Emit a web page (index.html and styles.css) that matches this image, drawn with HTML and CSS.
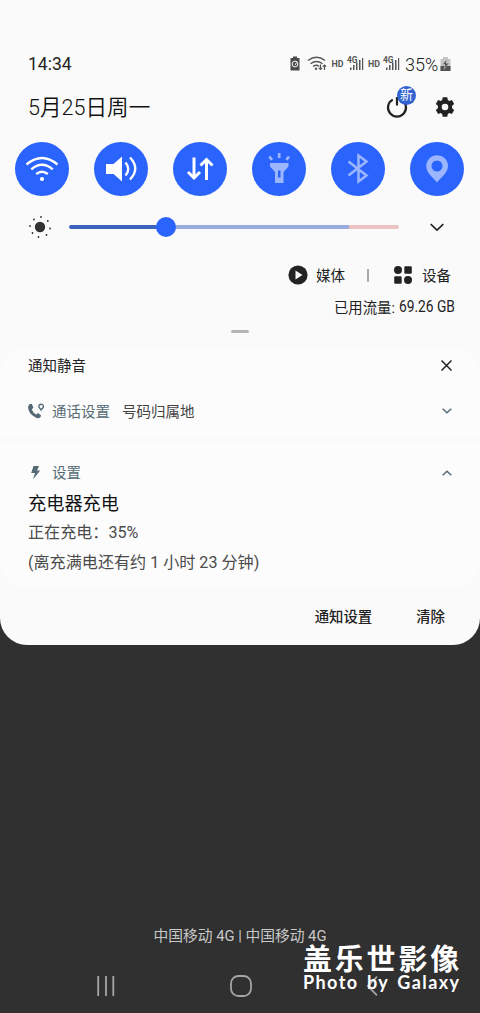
FILE: index.html
```html
<!DOCTYPE html>
<html lang="zh-CN">
<head>
<meta charset="utf-8">
<title>通知面板</title>
<link rel="stylesheet" href="styles.css">
</head>
<body>
<main class="screen">
  <section class="panel">
    <header class="status">
      <span class="clock">14:34</span>
      <svg class="status-icons" width="115" height="24" viewBox="0 0 115 24">
        <path fill="#4a4a4a" d="M3 4.500h4v1.500h2.500v12.500h-9V6H3z"/>
        <circle cx="5" cy="12" r="2.900" fill="none" stroke="#fafafa"/>
        <path stroke="#fafafa" d="M5 13l1.500-2.500"/>
        <g fill="none" stroke="#555" stroke-width="1.400"><path d="M18 8.500q8.500-6.500 17 0M20.500 11.700q6-4.500 12 0M23 14.500q3.500-2.500 6 0"/><path stroke-width="1.200" d="M30.500 12.500v5m-1.700-1.700 1.700 1.700 1.700-1.700M34.500 18v-5m-1.700 1.700 1.700-1.700 1.700 1.700"/></g>
        <circle cx="26" cy="16.700" r="1.200" fill="#555"/>
        <g class="net"><text x="41.500" y="15" textLength="12" lengthAdjust="spacingAndGlyphs">HD</text><text x="78" y="15" textLength="12" lengthAdjust="spacingAndGlyphs">HD</text><text x="57" y="11" textLength="10.500" lengthAdjust="spacingAndGlyphs">4G</text><text x="93" y="11" textLength="10.500" lengthAdjust="spacingAndGlyphs">4G</text></g>
        <path fill="#555" d="M60 15.500h1.500V18H60zM63 13h1.500v5H63zM66 10.500h1.500V18H66zM69 8h1.500v10H69zM72 6h1.200v12H72zM96 15.500h1.500V18H96zM99 13h1.500v5H99zM102 10.500h1.500V18H102zM105 8h1.500v10H105zM108 6h1.200v12H108z"/>
      </svg>
      <span class="percent">35%</span>
      <svg class="battery" width="11" height="16" viewBox="0 0 11 16"><path fill="#c4c4c4" d="M3 1h5v2h2.500v12H.5V3H3z"/><path fill="#505050" d="M.5 10h10v5H.5z"/><path fill="#505050" stroke="#ccc" stroke-width=".5" d="M7 3 2.500 8.500H5l-1 5 5-6.300H6z"/></svg>
    </header>

    <div class="date-row">
      <span class="date">5月25日周一</span>
      <span class="power">
        <svg width="22" height="24" viewBox="0 0 22 24" fill="none" stroke="#222" stroke-width="2.200"><path d="M6.800 4.600a9 9 0 1 0 8.400 0M11 2v8.500"/></svg>
        <b class="badge">新</b>
      </span>
      <svg class="gear" width="20" height="20" viewBox="0 0 20 20"><path fill="#222" fill-rule="evenodd" d="M7.700.300h4.600l.5 2.700 1.500.900 2.600-1 2.300 4-2.100 1.800v2.600l2.100 1.800-2.300 4-2.600-1-1.500.900-.5 2.700H7.700L7.200 17l-1.500-.900-2.600 1-2.300-4 2.100-1.800V8.700L.8 6.900l2.300-4 2.600 1L7.200 3zM10 6.700a3.300 3.300 0 1 0 0 6.600 3.300 3.300 0 1 0 0-6.600z"/></svg>
    </div>

    <nav class="quick">
      <span class="toggle"><svg viewBox="0 0 54 54" fill="none" stroke="#fff" stroke-width="2.400"><path d="M11.500 22.500q15.500-13 31 0M16.300 27.300q10.700-9 21.400 0M21.200 32q5.800-4.500 11.600 0"/><circle cx="27" cy="37" r="2.100" fill="#fff" stroke="none"/></svg></span>
      <span class="toggle"><svg viewBox="0 0 54 54" fill="none" stroke="#fff" stroke-width="2.300"><path fill="#fff" stroke="none" d="M12 22h7.500L28 14.500v25L19.500 32H12z"/><path d="M31.500 20.500q5.500 6.500 0 13M36 15.500q10.500 11 0 22"/></svg></span>
      <span class="toggle"><svg viewBox="0 0 54 54" fill="none" stroke="#fff" stroke-width="3"><path d="M21 15.500V37m-6-7 6 6 6-6M33.500 38V17m-6 6.500 6-6 6 6"/></svg></span>
      <span class="toggle"><svg viewBox="0 0 54 54"><path fill="#9bb6ff" fill-rule="evenodd" d="M18 21h18.500v3.500L31.500 30v11h-8.500V30L18 24.500zM26 28.500v7h2.500v-7z"/><path stroke="#9bb6ff" stroke-width="2.700" d="M27.200 11v5M17.300 14.500l2.700 3.300M37 14.500l-2.700 3.300"/></svg></span>
      <span class="toggle"><svg viewBox="0 0 54 54" fill="none" stroke="#9bb6ff" stroke-width="2.500"><path d="M17.500 19.500 35.500 33.500l-8 6V13.500l8 6-18 14"/></svg></span>
      <span class="toggle"><svg viewBox="0 0 54 54"><path fill="#9bb6ff" fill-rule="evenodd" d="M27 13.300A10.800 10.800 0 0 0 16.200 24c0 7 7 11.500 10.800 16.500C30.800 35.500 38 31 38 24a10.800 10.800 0 0 0-11-10.700zM27 18.500a5.500 5.500 0 1 1 0 11 5.500 5.500 0 1 1 0-11z"/></svg></span>
    </nav>

    <div class="brightness">
      <svg class="sun" width="24" height="24" viewBox="0 0 24 24"><circle cx="12" cy="12" r="5.200" fill="#333"/><path stroke="#333" stroke-width="1.800" stroke-linecap="round" d="M13 2v.01M19.800 6v.01M22 13.500v.01M18.500 20v.01M10.500 22v.01M4.500 18v.01M2 11v.01M6 4.500v.01"/></svg>
      <div class="track"><i class="done"></i><i class="rest"></i><i class="hot"></i><i class="knob"></i></div>
      <svg class="expand" width="14" height="9" viewBox="0 0 14 9" fill="none" stroke="#222" stroke-width="1.600"><path d="m.7 1.200 6.300 6 6.300-6"/></svg>
    </div>

    <div class="links">
      <svg width="20" height="20" viewBox="0 0 20 20"><circle cx="10" cy="10" r="9.600" fill="#222"/><path fill="#fafafa" d="M7.500 5.500v9l7-4.500z"/></svg>
      <span class="media">媒体</span>
      <i class="divider"></i>
      <svg width="18" height="18" viewBox="0 0 18 18" fill="#222"><circle cx="4" cy="4" r="4"/><rect x="10.300" y=".2" width="7.500" height="7.500" rx="1.300"/><rect x=".2" y="10.300" width="7.500" height="7.500" rx="1.300"/><circle cx="14" cy="14" r="4"/></svg>
      <span class="device">设备</span>
    </div>
    <div class="usage"><span>已用流量:</span><span class="amount">69.26 GB</span></div>
    <div class="handle"></div>

    <article class="card card-top">
      <div class="row head"><span>通知静音</span><svg width="11" height="11" viewBox="0 0 11 11" stroke="#222" stroke-width="1.500"><path d="m.5.500 10 10m0-10-10 10"/></svg></div>
      <div class="row call">
        <svg class="app-icon" width="16" height="16" viewBox="0 0 16 16"><path fill="#566a75" d="M1.300 1.200 3.800.800l1.600 4-1.700 1.600q1.500 3.500 4.500 5l1.800-1.500 3.200 2.500-1 2.200q-2.200 1.300-5-.3Q-.5 10 .2 3.500z"/><path fill="none" stroke="#566a75" stroke-width="1.400" d="M13.200 1.200a2.200 2.200 0 0 0-2.300 2.300c0 1.500 1.500 2 2.200 3.500.8-1.500 2.300-2 2.300-3.500a2.200 2.200 0 0 0-2.200-2.300z"/></svg>
        <span class="app">通话设置</span><span class="note">号码归属地</span>
        <svg class="caret" width="10" height="6" viewBox="0 0 10 6"><path d="m.7.800 4.300 4 4.300-4"/></svg>
      </div>
    </article>
    <article class="card card-bottom">
      <div class="row charge">
        <svg class="app-icon" width="16" height="16" viewBox="0 0 16 16"><path fill="#566a75" d="M5.500 1H11L9 5.500h3.200L5 14.500 7 8H3.200z"/></svg>
        <span class="app">设置</span>
        <svg class="caret" width="10" height="6" viewBox="0 0 10 6"><path d="m.7 5.200 4.300-4 4.300 4"/></svg>
      </div>
      <h1 class="title">充电器充电</h1>
      <p class="line">正在充电：35%</p>
      <p class="line remain">(离充满电还有约 1 小时 23 分钟)</p>
    </article>
    <footer class="actions"><span>通知设置</span><span>清除</span></footer>
  </section>

  <div class="carrier">中国移动 4G | 中国移动 4G</div>
  <nav class="navbar">
    <svg width="18" height="20" viewBox="0 0 18 20" stroke="#a5a5a5" stroke-width="1.800"><path d="M1.200 0v20M9 0v20M16.300 0v20"/></svg>
    <svg width="22" height="22" viewBox="0 0 22 22" fill="none" stroke="#a5a5a5" stroke-width="1.800"><rect x="1" y="1" width="20" height="20" rx="7.500"/></svg>
    <svg width="12" height="20" viewBox="0 0 12 20" fill="none" stroke="#a5a5a5" stroke-width="1.800"><path d="M11 .7 1.800 10 11 19.300"/></svg>
  </nav>
  <div class="watermark"><div class="brand">盖乐世影像</div><div class="byline">Photo by Galaxy</div></div>
</main>
</body>
</html>
```
FILE: styles.css
```css
* { box-sizing: border-box; }
body { margin: 0; background: #303030; font-family: Roboto, "Noto Sans CJK SC", sans-serif; color: #222; }
svg { display: block; flex: none; }
span { white-space: nowrap; }
.screen { position: relative; width: 480px; height: 1013px; overflow: hidden; background: #303030; display: flex; flex-direction: column; }
.panel { height: 645px; flex: none; padding-top: 44px; background: #fafafa; border-radius: 0 0 27px 27px; overflow: hidden; }

.status { height: 40px; display: flex; align-items: center; padding: 0 29px 0 28px; }
.clock { font-size: 17.500px; margin-right: auto; }
.net { font: 700 9.500px Roboto, sans-serif; fill: #555; }
.percent { font-size: 18px; font-weight: 300; color: #222; width: 35px; }

.date-row { height: 46px; display: flex; align-items: center; padding: 0 25px 0 28px; }
.date { font-size: 21.600px; line-height: 30px; margin: 2px auto 0 0; font-weight: 350; color: #111; }
.power { position: relative; margin-right: 27px; }
.badge { position: absolute; left: 11px; top: -9px; width: 19px; height: 19px; border-radius: 50%; background: #3162cf; color: #fff; font-size: 13px; font-weight: 400; line-height: 18px; text-align: center; }

.quick { display: flex; gap: 25px; padding: 12px 0 0 15px; }
.toggle { width: 54px; height: 54px; flex: none; border-radius: 50%; background: #2b63fd; }

.brightness { display: flex; align-items: center; height: 40px; margin-top: 11px; padding: 0 36px 0 28px; }
.track { position: relative; display: flex; width: 330px; height: 4px; margin-left: 17px; border-radius: 2px; }
.done { width: 97px; background: #3d63bf; border-radius: 2px 0 0 2px; }
.rest { width: 183px; background: #98ace0; }
.hot { width: 50px; background: #ebc3c2; border-radius: 0 2px 2px 0; }
.knob { position: absolute; left: 87px; top: -8px; width: 20px; height: 20px; border-radius: 50%; background: #2b63fd; }
.expand { margin-left: auto; }

.links { display: flex; align-items: center; justify-content: flex-end; height: 34px; margin-top: 11px; padding-right: 29px; font-size: 14.500px; }
.links span { padding-bottom: 1px; }
.media { margin-left: 8px; }
.divider { width: 2px; height: 13px; background: #aaa; margin: 0 25px 0 22px; }
.device { margin-left: 10px; }
.usage { display: flex; align-items: center; justify-content: flex-end; height: 26px; margin-top: 1px; padding-right: 25px; font-size: 14.400px; }
.amount { width: 56px; margin-left: 4px; font-size: 16px; transform: scaleX(.86); transform-origin: left; }
.handle { width: 18px; height: 3px; margin: 11px auto 0; border-radius: 2px; background: #b5b5b5; }

.card { background: #fcfcfc; padding: 0 28px; }
.card-top { margin-top: 15px; height: 89px; border-radius: 26px 26px 0 0; }
.card-bottom { margin-top: 6px; height: 144px; border-radius: 0 0 26px 26px; overflow: hidden; }
.row { display: flex; align-items: center; font-size: 14.500px; }
.row span { padding-bottom: 2px; }
.head { height: 35px; justify-content: space-between; }
.call { height: 56px; }
.app { margin-left: 8px; color: #566a75; }
.note { margin-left: 12px; color: #444; }
.caret { margin-left: auto; fill: none; stroke: #566a75; stroke-width: 1.500; }
.charge { height: 58px; padding-top: 1px; }
.title { margin: -10px 0 0; height: 26px; line-height: 26px; font-size: 18.200px; font-weight: 400; color: #111; }
.line { margin: 3px 0 0; height: 26px; line-height: 26px; font-size: 16.100px; color: #4b4b4b; white-space: nowrap; }
.remain { margin-top: 4px; }
.actions { display: flex; justify-content: flex-end; align-items: center; gap: 44px; height: 56px; padding-right: 35px; font-size: 14.400px; font-weight: 500; }

.carrier { margin-top: 278px; height: 26px; line-height: 26px; text-align: center; font-size: 14.750px; color: #c8c8c8; }
.navbar { display: flex; align-items: center; height: 58px; margin-top: 9px; padding: 0 102px 0 97px; justify-content: space-between; }
.watermark { position: absolute; left: 303px; top: 940px; width: 160px; color: #fff; white-space: nowrap; }
.brand { font: 700 29px/34px "Noto Sans CJK SC", sans-serif; letter-spacing: 2.800px; }
.byline { font: 700 18px/20px Lato, sans-serif; letter-spacing: 1.400px; word-spacing: 2.800px; margin-top: -2px; }
```
